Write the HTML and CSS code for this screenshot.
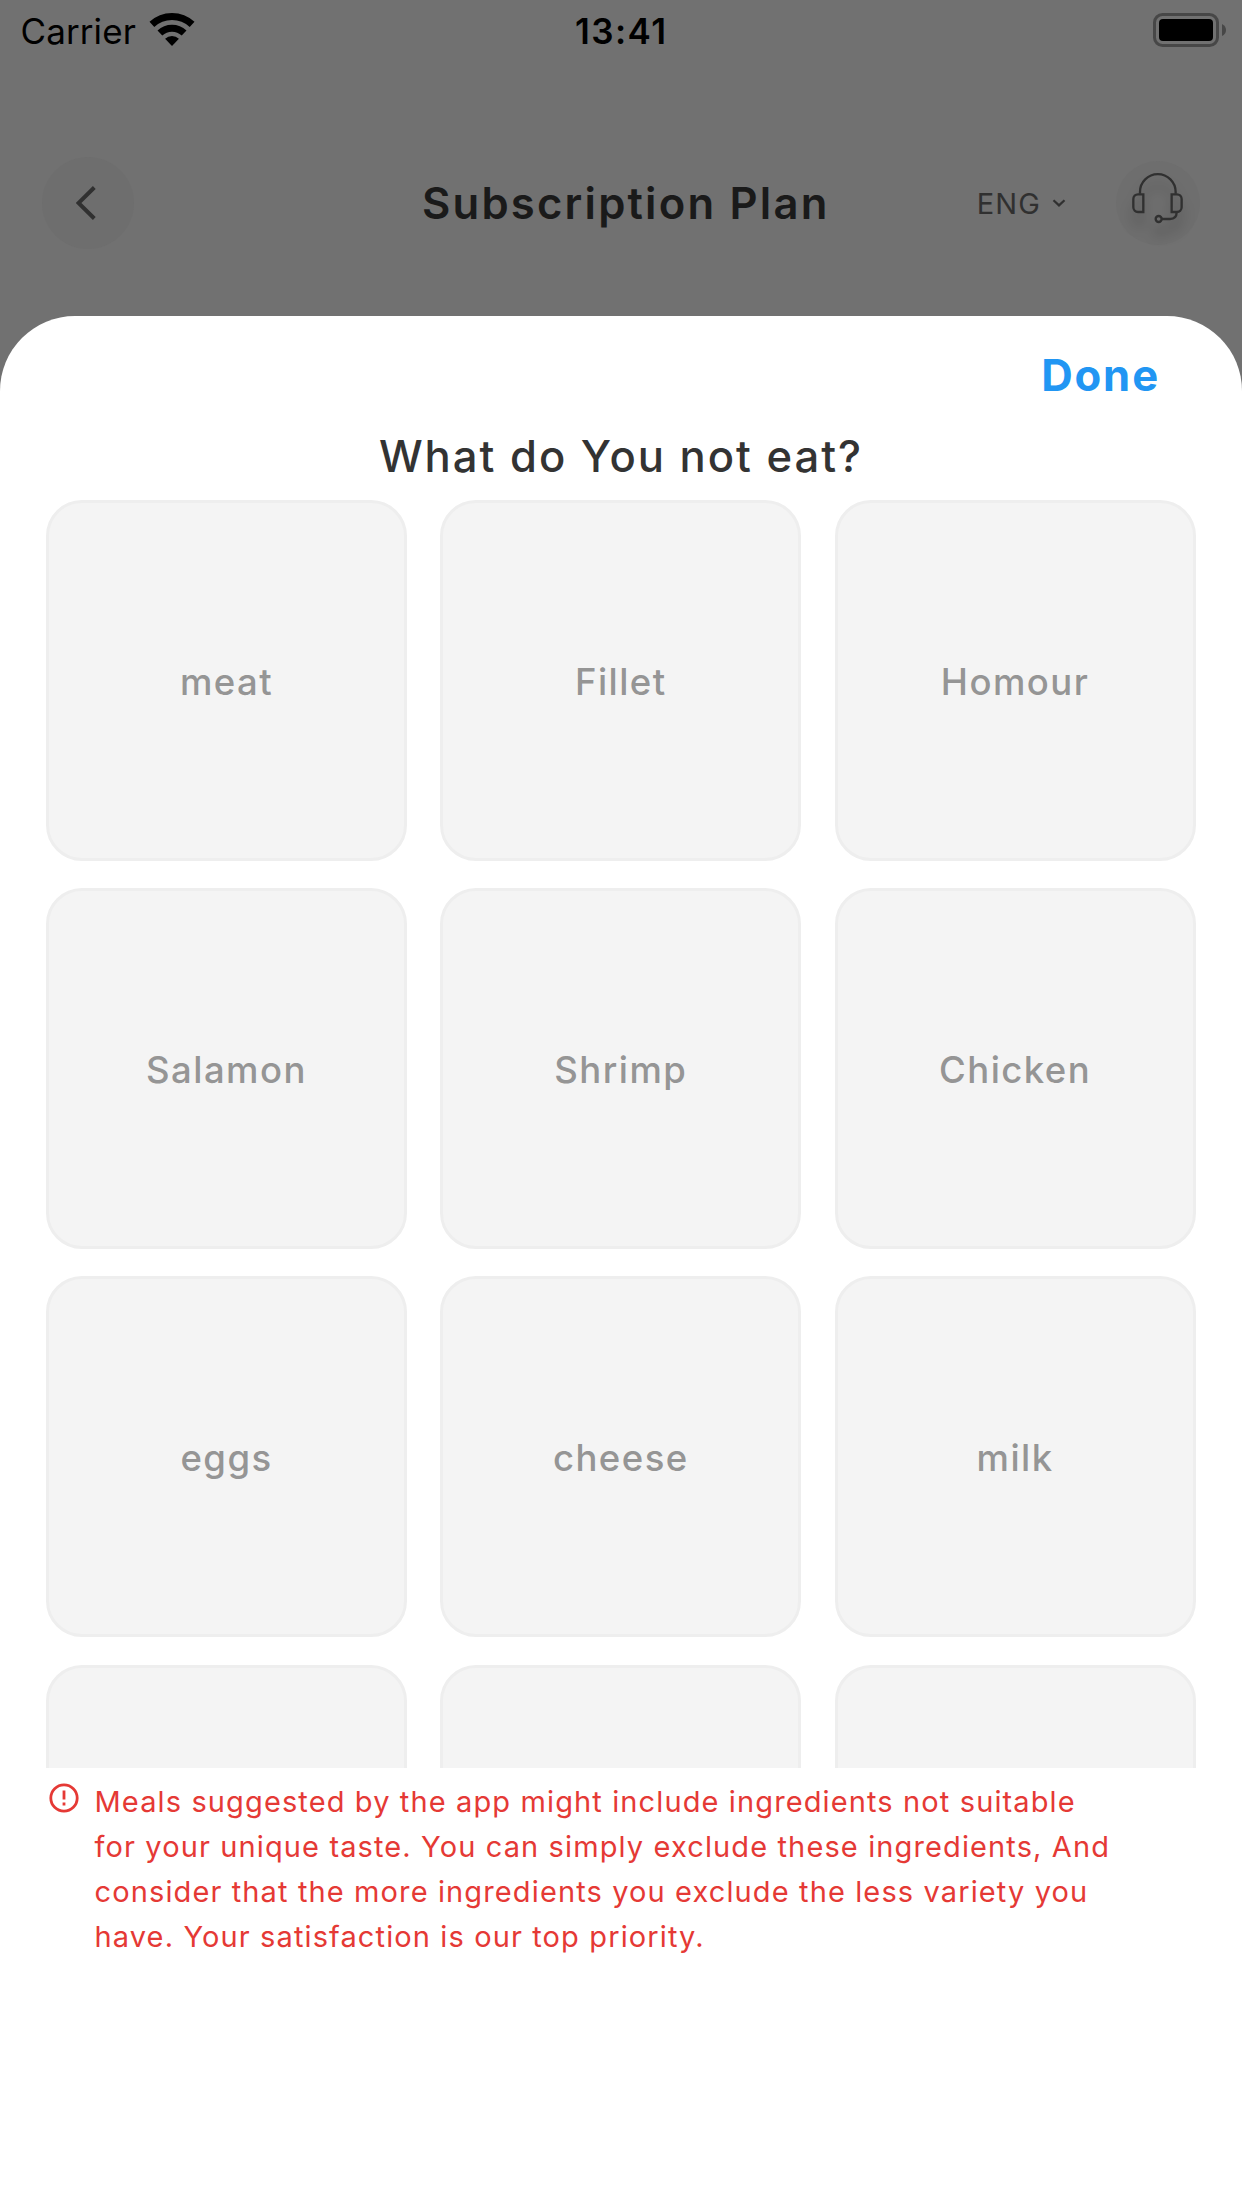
FILE: index.html
```html
<!DOCTYPE html>
<html lang="en">
<head>
    <meta charset="utf-8">
    <meta name="viewport" content="width=device-width, initial-scale=1">
    <title>Subscription Plan</title>
    <link rel="stylesheet" href="styles.css">
</head>
<body>
    <div class="status-bar">
        <div class="carrier">
            <span>Carrier</span>
            <svg class="wifi" viewBox="148 12 48 35">
                <path class="band" d="M151.9 24.4A29.5 29.5 0 0 1 192.1 24.4"/>
                <path class="band" d="M159.9 33A17.7 17.7 0 0 1 184.1 33"/>
                <path d="M172 46L165.1 38.8A10.2 10.2 0 0 1 178.9 38.8Z"/>
            </svg>
        </div>
        <div class="time">13:41</div>
        <div class="battery-wrap">
            <svg class="battery" viewBox="0 0 74 34">
                <rect class="shell" x="1.5" y="1.5" width="63" height="31" rx="8"/>
                <rect x="6" y="6" width="54" height="22" rx="4"/>
                <path class="nub" d="M69 11Q73 13 73 17T69 23Z"/>
            </svg>
        </div>
    </div>

    <header class="header">
        <button class="back" aria-label="Back">
            <svg viewBox="0 0 20 34"><path d="M18.3 1.5L2.5 17L18.3 32.5"/></svg>
        </button>
        <h1 class="title">Subscription Plan</h1>
        <div class="lang">
            <span>ENG</span>
            <svg viewBox="0 0 14 8"><path d="M1.5 1.2L7 6.4L12.5 1.2"/></svg>
        </div>
        <button class="support" aria-label="Support">
            <svg viewBox="575 515 160 160">
                <path d="M602 580V575A53.5 53.5 0 0 1 709 575V580"/>
                <path d="M612 582H596a14 14 0 0 0-14 14v25a14 14 0 0 0 14 14H612Z"/>
                <path d="M697 582H713a14 14 0 0 1 14 14v25a14 14 0 0 1-14 14H697Z"/>
                <path d="M712 636C712 650 704 656 692 656H668"/>
                <circle cx="658" cy="656" r="9"/>
            </svg>
        </button>
    </header>

    <div class="sheet">
        <button class="done">Done</button>
        <h2 class="question">What do You not eat?</h2>
        <div class="ingredients">
            <div class="card">meat</div>
            <div class="card">Fillet</div>
            <div class="card">Homour</div>
            <div class="card">Salamon</div>
            <div class="card">Shrimp</div>
            <div class="card">Chicken</div>
            <div class="card">eggs</div>
            <div class="card">cheese</div>
            <div class="card">milk</div>
            <div class="card"></div>
            <div class="card"></div>
            <div class="card"></div>
        </div>
        <div class="note">
            <svg viewBox="0 0 30 30">
                <circle cx="15" cy="15" r="13.2"/>
                <path d="M15 7.5V16.5M15 19.5V22.5"/>
            </svg>
            <p>Meals suggested by the app might include ingredients not suitable for your unique taste. You can simply exclude these ingredients, And consider that the more ingredients you exclude the less variety you have. Your satisfaction is our top priority.</p>
        </div>
    </div>
</body>
</html>
```
FILE: styles.css
```css
* {
    box-sizing: border-box;
}

body {
    margin: 0;
    height: 2208px;
    display: flex;
    flex-direction: column;
    overflow: hidden;
    background: #717171;
    font-family: Inter, "Liberation Sans", sans-serif;
}

button {
    padding: 0;
    border: none;
    font-family: inherit;
    cursor: pointer;
}

h1, h2, p {
    margin: 0;
}

/* status bar */
.status-bar {
    display: grid;
    grid-template-columns: 1fr auto 1fr;
    align-items: center;
    height: 62px;
    padding: 0 15px 0 20.5px;
    font-size: 35px;
    line-height: 62px;
    color: #000;
}

.carrier {
    display: flex;
    letter-spacing: 0.1px;
}

.wifi {
    width: 48px;
    height: 35px;
    margin: 12px 0 0 12px;
}

.wifi .band {
    fill: none;
    stroke: #000;
    stroke-width: 7;
}

.time {
    margin-right: 5px;
    font-weight: 600;
    letter-spacing: 1.45px;
}

.battery-wrap {
    display: flex;
    justify-content: flex-end;
}

.battery {
    width: 74px;
    height: 34px;
    margin-bottom: 2px;
}

.battery .shell {
    fill: none;
    stroke: #474747;
    stroke-width: 3;
}

.battery .nub {
    fill: #474747;
}

/* page header */
.header {
    display: flex;
    align-items: center;
    height: 92px;
    margin-top: 95px;
    padding: 0 42px;
}

.header svg {
    fill: none;
    stroke: #303030;
}

.back {
    display: flex;
    align-items: center;
    justify-content: center;
    width: 92px;
    height: 92px;
    padding-right: 5px;
    border-radius: 50%;
    background: #6e6e6e;
}

.back svg {
    width: 20px;
    height: 34px;
    stroke-width: 4;
}

.title {
    margin-left: 288px;
    font-size: 43.6px;
    font-weight: 600;
    letter-spacing: 2.2px;
    color: #1a1a1a;
}

.lang {
    display: flex;
    align-items: center;
    gap: 11px;
    margin-left: auto;
    font-size: 29px;
    letter-spacing: 1.1px;
    color: #303030;
}

.lang svg {
    width: 14px;
    height: 8px;
    stroke-width: 2.2;
}

.support {
    display: flex;
    align-items: center;
    justify-content: center;
    width: 84px;
    height: 84px;
    margin-left: 50px;
    padding-bottom: 9px;
    border-radius: 50%;
    background: #6e6e6e;
}

.support svg {
    width: 53.3px;
    height: 53.3px;
    stroke-width: 7;
    overflow: visible;
    filter: drop-shadow(0 12px 6px rgba(0, 0, 0, 0.25));
}

/* bottom sheet */
.sheet {
    flex: 1;
    display: flex;
    flex-direction: column;
    margin-top: 66.5px;
    padding-top: 30.5px;
    border-radius: 75px 75px 0 0;
    background: #fff;
}

.done {
    align-self: flex-end;
    height: 60px;
    margin-right: 82px;
    background: none;
    font-size: 43.6px;
    font-weight: 700;
    line-height: 60px;
    letter-spacing: 1.88px;
    color: #2196f3;
}

.question {
    height: 71px;
    margin-top: 23px;
    font-size: 43.6px;
    font-weight: 500;
    line-height: 56px;
    letter-spacing: 1.99px;
    text-align: center;
    color: #333;
}

.ingredients {
    display: grid;
    grid-template-columns: repeat(3, 361px);
    grid-auto-rows: 361px;
    gap: 27.2px 33.3px;
    height: 1268px;
    padding: 0 46px;
    overflow: hidden;
}

.card {
    display: flex;
    align-items: center;
    justify-content: center;
    padding-top: 3px;
    border: 3px solid #eee;
    border-radius: 36px;
    background: #f4f4f4;
    font-size: 36.5px;
    font-weight: 500;
    letter-spacing: 1.45px;
    color: #959595;
}

.note {
    display: flex;
    gap: 15.5px;
    padding: 11px 0 0 49px;
    color: #e53935;
}

.note svg {
    flex: none;
    width: 30px;
    height: 30px;
    margin-top: 4px;
    fill: none;
    stroke: #e53935;
    stroke-width: 2.8;
}

.note p {
    width: 1020px;
    font-size: 29px;
    line-height: 45px;
    letter-spacing: 1.12px;
}
```
